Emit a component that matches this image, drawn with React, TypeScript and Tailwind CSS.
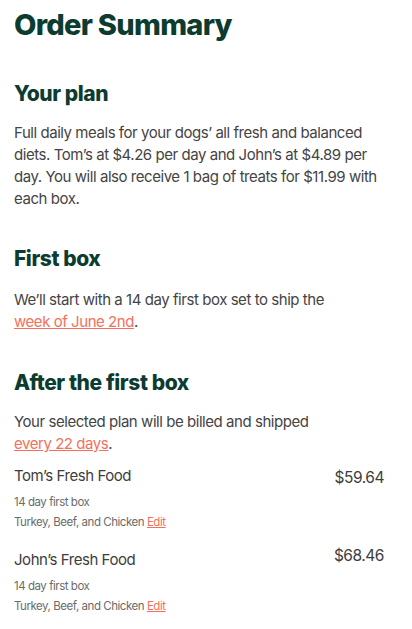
import React from "react";

const Item = ({ name, price, priceClass }: { name: string; price: string; priceClass: string }) => (
  <div className="flex justify-between">
    <div>
      <div className="text-[15px] leading-[20px] text-[#3d3d3d] tracking-[-0.03em]">{name}</div>
      <div className="mt-[8px] text-[11.5px] leading-[16px] text-[#6b6b6b] tracking-[-0.04em]">14 day first box</div>
      <div className="mt-[4px] text-[11.5px] leading-[16px] text-[#6b6b6b] tracking-[-0.04em]">
        Turkey, Beef, and Chicken <span className="text-[#f76f5b] underline">Edit</span>
      </div>
    </div>
    <div className={`text-[15.5px] leading-[20px] text-[#3d3d3d] tracking-[-0.03em] ${priceClass}`}>{price}</div>
  </div>
);

export default function App() {
  return (
    <div className="px-[14px] pt-[6px] pr-[28px] font-['Inter',sans-serif]">
      <h1 className="text-[29px] leading-[38px] font-extrabold text-[#0c3b30] tracking-[-0.025em]">Order Summary</h1>
      <h2 className="mt-[36px] text-[21px] leading-[28px] font-extrabold text-[#0c3b30] tracking-[-0.02em]">Your plan</h2>
      <p className="mt-[14px] text-[15px] leading-[22px] text-[#444] tracking-[-0.03em]">
        Full daily meals for your dogs’ all fresh and balanced diets. Tom’s at $4.26 per day and John’s at $4.89 per day. You will also receive 1 bag of treats for $11.99 with each box.
      </p>
      <h2 className="mt-[35px] text-[21px] leading-[28px] font-extrabold text-[#0c3b30] tracking-[-0.02em]">First box</h2>
      <p className="mt-[16px] text-[15px] leading-[22px] text-[#444] tracking-[-0.03em]">
        We’ll start with a 14 day first box set to ship the
        <br />
        <span className="text-[#f76f5b] underline">week of June 2nd</span>.
      </p>
      <h2 className="mt-[36px] text-[21px] leading-[28px] font-extrabold text-[#0c3b30] tracking-[-0.02em]">After the first box</h2>
      <p className="mt-[14px] text-[15px] leading-[22px] text-[#444] tracking-[-0.03em]">
        Your selected plan will be billed and shipped
        <br />
        <span className="text-[#f76f5b] underline">every 22 days</span>.
      </p>
      <div className="mt-[11px] flex flex-col gap-[20px]">
        <Item name="Tom’s Fresh Food" price="$59.64" priceClass="mt-[2px]" />
        <Item name="John’s Fresh Food" price="$68.46" priceClass="-mt-[4px]" />
      </div>
    </div>
  );
}
